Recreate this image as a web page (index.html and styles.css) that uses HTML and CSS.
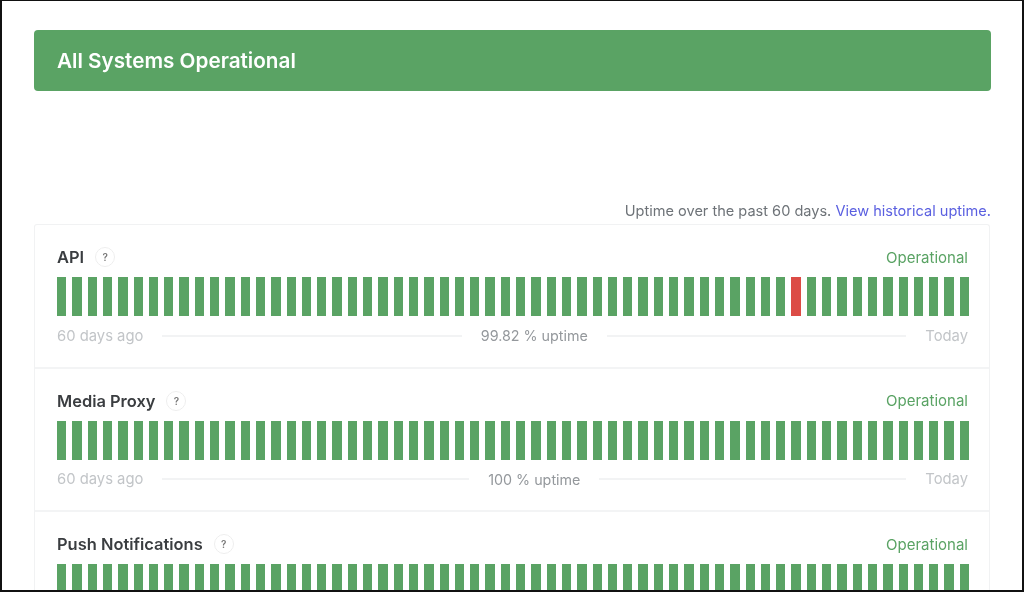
FILE: index.html
```html
<!DOCTYPE html>
<html lang="en">
<head>
  <meta charset="UTF-8" />
  <meta name="viewport" content="width=device-width, initial-scale=1.0" />
  <title>Status</title>
  <link rel="stylesheet" href="styles.css">
</head>
<body>

<div class="frame">
  <div class="banner">All Systems Operational</div>

  <p class="uptime-note">Uptime over the past 60 days. <a href="#">View historical uptime.</a></p>

  <div class="components">
    <div class="component">
      <div class="component-head">
        <span class="name">API</span>
        <span class="help">?</span>
        <span class="state">Operational</span>
      </div>
      <div class="bars" data-down="48"></div>
      <div class="component-foot">
        <span>60 days ago</span>
        <span class="rule"></span>
        <span class="percent">99.82 % uptime</span>
        <span class="rule"></span>
        <span>Today</span>
      </div>
    </div>

    <div class="component">
      <div class="component-head">
        <span class="name">Media Proxy</span>
        <span class="help">?</span>
        <span class="state">Operational</span>
      </div>
      <div class="bars"></div>
      <div class="component-foot">
        <span>60 days ago</span>
        <span class="rule"></span>
        <span class="percent">100 % uptime</span>
        <span class="rule"></span>
        <span>Today</span>
      </div>
    </div>

    <div class="component">
      <div class="component-head">
        <span class="name">Push Notifications</span>
        <span class="help">?</span>
        <span class="state">Operational</span>
      </div>
      <div class="bars"></div>
    </div>
  </div>
</div>

<script>
document.querySelectorAll(".bars").forEach((row) => {
  for (let i = 0; i < 60; i++) {
    const bar = document.createElement("span");
    bar.className = String(i) === row.dataset.down ? "bar down" : "bar";
    row.appendChild(bar);
  }
});
</script>

</body>
</html>
```

FILE: styles.css
```css
* { margin: 0; padding: 0; box-sizing: border-box; }

body {
  font-family: Inter, sans-serif;
  background: #fff;
  color: #333;
}

.frame {
  height: 592px;
  overflow: hidden;
  border: solid #111;
  border-width: 1px 2px 2px 2px;
  padding: 29px 31px 0 32px;
}

/* the source shot is slightly soft */
.frame > * { filter: blur(0.4px); }

.banner {
  height: 61px;
  padding: 0 23px;
  display: flex;
  align-items: center;
  background: #5aa364;
  border-radius: 4px;
  color: #fff;
  font-size: 20.7px;
  font-weight: 600;
}

.uptime-note {
  margin-top: 110px;
  height: 23px;
  line-height: 20px;
  text-align: right;
  font-size: 14.55px;
  color: #6e7378;
}

.uptime-note a {
  color: #5a5fe0;
  text-decoration: none;
}

.components {
  margin-right: 1px;
  border: 1px solid #f1f2f3;
  border-bottom: none;
  border-radius: 3px 3px 0 0;
}

.component {
  height: 143.5px;
  padding: 20px 20px 0 22px;
  border-bottom: 2px solid #f3f4f5;
}

.component-head {
  display: flex;
  align-items: center;
  height: 24px;
  margin-bottom: 8px;
}

.name {
  font-size: 16.45px;
  font-weight: 600;
  color: #3a3d40;
}

.help {
  width: 20px;
  height: 20px;
  margin-left: 11px;
  border: 1px solid #eeeeee;
  border-radius: 50%;
  display: flex;
  align-items: center;
  justify-content: center;
  font-size: 10px;
  font-weight: 600;
  color: #777;
}

.state {
  margin-left: auto;
  margin-right: 1px;
  font-size: 15px;
  color: #5aa364;
}

.bars {
  display: grid;
  grid-template-columns: repeat(60, 1fr);
  gap: 6px;
  height: 39px;
}

.bar { background: #5aa364; }
.bar.down { background: #dc4c46; }

.component-foot {
  display: flex;
  align-items: center;
  gap: 19px;
  height: 19px;
  margin-top: 10px;
  margin-right: 1px;
  font-size: 14.8px;
  color: #c2c5c8;
}

.rule {
  flex: 1;
  height: 2px;
  background: #f2f3f4;
}

.percent {
  font-size: 14.3px;
  color: #94989c;
}
```
